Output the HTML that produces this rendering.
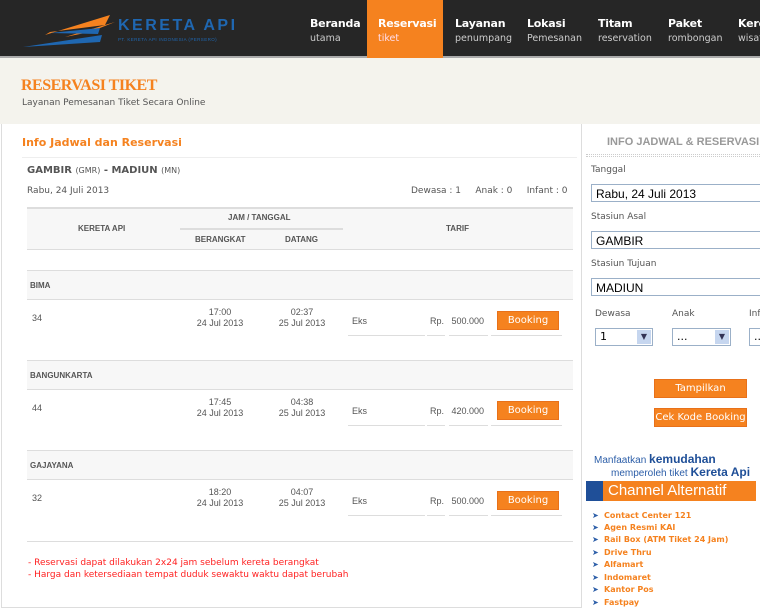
<!DOCTYPE html><html><head><style>
*{margin:0;padding:0;box-sizing:border-box}
body{width:760px;height:609px;overflow:hidden;background:#fff;font-family:"DejaVu Sans","Liberation Sans",sans-serif;position:relative;color:#555}
.a{position:absolute}
.hdr{left:0;top:0;width:760px;height:58px;background:#262626;border-bottom:2px solid #aaa}
.nav b{display:block;color:#fff;font-size:11px;font-weight:bold;letter-spacing:-.2px}
.nav span{display:block;color:#ccc;font-size:9.5px;margin-top:3px}
.nav div{position:absolute;top:17px}
.ban{left:0;top:58px;width:760px;height:66px;background:#f4f3ed}
.f{font-family:"Liberation Sans",Arial,sans-serif}
.s{font-size:9px;color:#555}
.hl{height:1px;background:#ddd}
.btn{background:#f5821f;color:#fff;font-size:10px;text-align:center;border:1px solid #e8711a}
.inp{border:1px solid #9bb0c8;background:#fff;font-family:"Liberation Sans",sans-serif;font-size:12px;color:#000;padding:2px 4px;height:18px}
.sel{border:1px solid #9bb0c8;background:#fff;height:18px;font-size:11px;color:#000;padding:1px 4px}
.sel i{position:absolute;right:1px;top:1px;width:14px;height:14px;background:#c6d6ef;font-style:normal;font-size:8px;color:#335;text-align:center;line-height:14px}
.li{font-size:8px;color:#f5821f;font-weight:bold;left:604px}
.ar{font-size:8px;color:#2c5ea8;left:592px}
.t{font-size:9px;text-align:center;width:70px;white-space:nowrap;line-height:11px}
</style></head><body>
<div class="a hdr"></div>
<svg class="a" style="left:20px;top:10px" width="95" height="40" viewBox="0 0 95 40"><path d="M25 25 L90 5 L85 15 L30 22Z" fill="#f5821f"/><path d="M45 27 L95 12 L70 22Z" fill="#f5821f"/><path d="M3 37 L82 25 L80 32Z" fill="#1f67b1"/><path d="M30 23 L80 18 L78 24Z" fill="#1f67b1"/></svg>
<div class="a f" style="left:118px;top:17px;font-size:16px;font-weight:bold;color:#1f67b1;letter-spacing:2.5px">KERETA API</div>
<div class="a f" style="left:118px;top:37px;font-size:4.5px;color:#1f67b1;letter-spacing:.4px">PT. KERETA API INDONESIA (PERSERO)</div>
<div class="a" style="left:367px;top:0;width:76px;height:58px;background:#f5821f"></div>
<div class="nav">
<div style="left:310px"><b>Beranda</b><span>utama</span></div>
<div style="left:378px"><b>Reservasi</b><span style="color:#fde">tiket</span></div>
<div style="left:455px"><b>Layanan</b><span>penumpang</span></div>
<div style="left:527px"><b>Lokasi</b><span>Pemesanan</span></div>
<div style="left:598px"><b>Titam</b><span>reservation</span></div>
<div style="left:668px"><b>Paket</b><span>rombongan</span></div>
<div style="left:738px"><b>Kereta</b><span>wisata</span></div>
</div>
<div class="a ban"></div>
<div class="a" style="left:21px;top:77px;font-family:'Liberation Serif',serif;font-size:16px;font-weight:bold;color:#f5821f;letter-spacing:-.5px">RESERVASI TIKET</div>
<div class="a" style="left:22px;top:98px;font-size:9px;color:#555">Layanan Pemesanan Tiket Secara Online</div>
<div class="a" style="left:1px;top:124px;width:581px;height:484px;border:1px solid #ddd;border-top:none"></div>
<div class="a" style="left:22px;top:136px;font-size:11px;font-weight:bold;color:#f5821f">Info Jadwal dan Reservasi</div>
<div class="a hl" style="left:22px;top:157px;width:555px;background:#eee"></div>
<div class="a" style="left:27px;top:165px;font-size:10px;font-weight:bold;color:#555">GAMBIR <span style="font-weight:normal;font-size:8px">(GMR)</span> - MADIUN <span style="font-weight:normal;font-size:8px">(MN)</span></div>
<div class="a s" style="left:27px;top:186px">Rabu, 24 Juli 2013</div>
<div class="a s" style="left:411px;top:186px">Dewasa : 1 &nbsp;&nbsp;&nbsp; Anak : 0 &nbsp;&nbsp;&nbsp; Infant : 0</div>
<div class="a" style="left:27px;top:207px;width:546px;height:43px;background:#f7f7f7;border-top:2px solid #ddd;border-bottom:1px solid #ddd"></div>
<div class="a f" style="left:78px;top:224px;font-size:8px;font-weight:bold">KERETA API</div>
<div class="a f" style="left:228px;top:213px;font-size:8px;font-weight:bold">JAM / TANGGAL</div>
<div class="a" style="left:180px;top:228px;width:163px;height:2px;background:#ddd"></div>
<div class="a f" style="left:195px;top:235px;font-size:8px;font-weight:bold">BERANGKAT</div>
<div class="a f" style="left:285px;top:235px;font-size:8px;font-weight:bold">DATANG</div>
<div class="a f" style="left:446px;top:224px;font-size:8px;font-weight:bold">TARIF</div>

<div class="a" style="left:27px;top:270px;width:546px;height:30px;background:#f7f7f7;border-top:1px solid #ddd;border-bottom:1px solid #ddd"></div>
<div class="a f" style="left:30px;top:281px;font-size:8px;font-weight:bold">BIMA</div>
<div class="a f" style="left:32px;top:313px;font-size:9px">34</div>
<div class="a f t" style="left:185px;top:307px">17:00<br>24 Jul 2013</div>
<div class="a f t" style="left:267px;top:307px">02:37<br>25 Jul 2013</div>

<div class="a" style="left:27px;top:360px;width:546px;height:30px;background:#f7f7f7;border-top:1px solid #ddd;border-bottom:1px solid #ddd"></div>
<div class="a f" style="left:30px;top:371px;font-size:8px;font-weight:bold">BANGUNKARTA</div>
<div class="a f" style="left:32px;top:403px;font-size:9px">44</div>
<div class="a f t" style="left:185px;top:397px">17:45<br>24 Jul 2013</div>
<div class="a f t" style="left:267px;top:397px">04:38<br>25 Jul 2013</div>

<div class="a" style="left:27px;top:450px;width:546px;height:30px;background:#f7f7f7;border-top:1px solid #ddd;border-bottom:1px solid #ddd"></div>
<div class="a f" style="left:30px;top:461px;font-size:8px;font-weight:bold">GAJAYANA</div>
<div class="a f" style="left:32px;top:493px;font-size:9px">32</div>
<div class="a f t" style="left:185px;top:487px">18:20<br>24 Jul 2013</div>
<div class="a f t" style="left:267px;top:487px">04:07<br>25 Jul 2013</div>

<div class="a f" style="left:352px;top:316px;font-size:9px">Eks</div>
<div class="a f" style="left:430px;top:316px;font-size:9px">Rp. &nbsp;&nbsp;500.000</div>
<div class="a btn" style="left:497px;top:311px;width:62px;height:19px;line-height:17px">Booking</div>
<div class="a f" style="left:352px;top:406px;font-size:9px">Eks</div>
<div class="a f" style="left:430px;top:406px;font-size:9px">Rp. &nbsp;&nbsp;420.000</div>
<div class="a btn" style="left:497px;top:401px;width:62px;height:19px;line-height:17px">Booking</div>
<div class="a f" style="left:352px;top:496px;font-size:9px">Eks</div>
<div class="a f" style="left:430px;top:496px;font-size:9px">Rp. &nbsp;&nbsp;500.000</div>
<div class="a btn" style="left:497px;top:491px;width:62px;height:19px;line-height:17px">Booking</div>
<div class="a hl" style="left:348px;top:335px;width:77px"></div><div class="a hl" style="left:427px;top:335px;width:18px"></div><div class="a hl" style="left:449px;top:335px;width:39px"></div><div class="a hl" style="left:491px;top:335px;width:71px"></div>
<div class="a hl" style="left:348px;top:425px;width:77px"></div><div class="a hl" style="left:427px;top:425px;width:18px"></div><div class="a hl" style="left:449px;top:425px;width:39px"></div><div class="a hl" style="left:491px;top:425px;width:71px"></div>
<div class="a hl" style="left:348px;top:515px;width:77px"></div><div class="a hl" style="left:427px;top:515px;width:18px"></div><div class="a hl" style="left:449px;top:515px;width:39px"></div><div class="a hl" style="left:491px;top:515px;width:71px"></div>
<div class="a hl" style="left:27px;top:541px;width:546px"></div>
<div class="a" style="left:28px;top:557px;font-size:9px;color:#f22;line-height:12px">- Reservasi dapat dilakukan 2x24 jam sebelum kereta berangkat<br>- Harga dan ketersediaan tempat duduk sewaktu waktu dapat berubah</div>

<div class="a f" style="left:607px;top:136px;font-size:11px;font-weight:bold;color:#999">INFO JADWAL &amp; RESERVASI</div>
<div class="a" style="left:586px;top:154px;width:174px;height:3px;border-top:1px dotted #ccc;border-bottom:1px dotted #ccc"></div>
<div class="a s" style="left:591px;top:165px">Tanggal</div>
<div class="a inp" style="left:591px;top:184px;width:180px">Rabu, 24 Juli 2013</div>
<div class="a s" style="left:591px;top:212px">Stasiun Asal</div>
<div class="a inp" style="left:591px;top:231px;width:180px">GAMBIR</div>
<div class="a s" style="left:591px;top:259px">Stasiun Tujuan</div>
<div class="a inp" style="left:591px;top:278px;width:180px">MADIUN</div>
<div class="a s" style="left:595px;top:309px">Dewasa</div>
<div class="a s" style="left:672px;top:309px">Anak</div>
<div class="a s" style="left:749px;top:309px">Infant</div>
<div class="a sel" style="left:595px;top:328px;width:58px">1<i>&#9660;</i></div>
<div class="a sel" style="left:672px;top:328px;width:59px">...<i>&#9660;</i></div>
<div class="a sel" style="left:749px;top:328px;width:59px">...</div>
<div class="a btn" style="left:654px;top:379px;width:93px;height:19px;line-height:17px">Tampilkan</div>
<div class="a btn" style="left:654px;top:408px;width:93px;height:19px;line-height:17px">Cek Kode Booking</div>
<div class="a f" style="left:594px;top:452px;font-size:10px;color:#2c5ea8">Manfaatkan <b style="font-size:12px;color:#1f4f98">kemudahan</b></div>
<div class="a f" style="left:611px;top:465px;font-size:10px;color:#2c5ea8">memperoleh tiket <b style="font-size:12px;color:#1f4f98">Kereta Api</b></div>
<div class="a" style="left:586px;top:481px;width:170px;height:20px;background:#f5821f"></div>
<div class="a" style="left:586px;top:481px;width:17px;height:20px;background:#1f4f98"></div>
<div class="a f" style="left:608px;top:481px;font-size:15px;color:#fff;line-height:20px">Channel Alternatif</div>
<div class="a ar" style="top:511px">&#10148;</div><div class="a li" style="top:511px">Contact Center 121</div>
<div class="a ar" style="top:523px">&#10148;</div><div class="a li" style="top:523px">Agen Resmi KAI</div>
<div class="a ar" style="top:535px">&#10148;</div><div class="a li" style="top:535px">Rail Box (ATM Tiket 24 Jam)</div>
<div class="a ar" style="top:548px">&#10148;</div><div class="a li" style="top:548px">Drive Thru</div>
<div class="a ar" style="top:560px">&#10148;</div><div class="a li" style="top:560px">Alfamart</div>
<div class="a ar" style="top:573px">&#10148;</div><div class="a li" style="top:573px">Indomaret</div>
<div class="a ar" style="top:585px">&#10148;</div><div class="a li" style="top:585px">Kantor Pos</div>
<div class="a ar" style="top:598px">&#10148;</div><div class="a li" style="top:598px">Fastpay</div>
</body></html>
